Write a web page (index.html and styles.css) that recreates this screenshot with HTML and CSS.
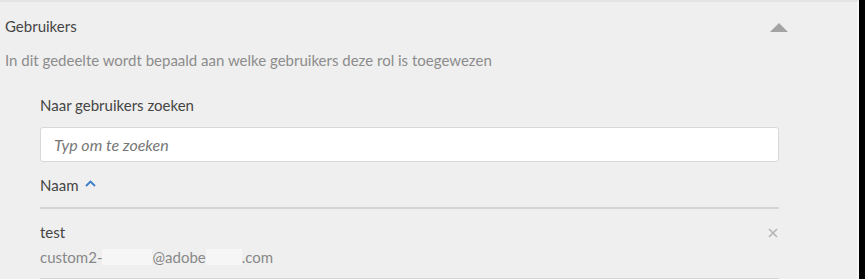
FILE: index.html
```html
<!DOCTYPE html>
<html lang="nl">
<head>
<meta charset="utf-8">
<link rel="stylesheet" href="styles.css">
</head>
<body>
<div class="frame">
  <section class="panel">
    <header class="panel-head">
      <h2 class="title">Gebruikers</h2>
      <span class="collapse" aria-hidden="true"></span>
    </header>
    <p class="desc">In dit gedeelte wordt bepaald aan welke gebruikers deze rol is toegewezen</p>
    <div class="body">
      <label class="label" for="q">Naar gebruikers zoeken</label>
      <input id="q" class="search" type="text" placeholder="Typ om te zoeken">
      <div class="col-head">Naam <svg class="chev" width="11" height="7" viewBox="0 0 11 7"><path d="M1 6 L5.5 1.5 L10 6" fill="none" stroke="#3a7bcb" stroke-width="1.8"/></svg></div>
      <div class="row">
        <div class="row-text">
          <div class="name">test</div>
          <div class="email">custom2-<span class="blur b1"></span>@adobe<span class="blur b2"></span>.com</div>
        </div>
        <svg class="remove" width="10" height="10" viewBox="0 0 10 10"><path d="M1 1 L9 9 M9 1 L1 9" stroke="#b5b5b5" stroke-width="1.6"/></svg>
      </div>
    </div>
  </section>
  <div class="edge"></div>
</div>
</body>
</html>
```

FILE: styles.css
```css
html, body {
  margin: 0;
  padding: 0;
  background: #efefef;
}
body {
  font-family: "Lato", "Open Sans", sans-serif;
  color: #4b4b4b;
  overflow: hidden;
}
.frame {
  display: flex;
  height: 279px;
  width: 865px;
}
.panel {
  flex: 1;
  border-top: 2px solid #e4e4e4;
  box-sizing: border-box;
  height: 279px;
  border-right: 2px solid #f7f7f7;
}
.edge {
  width: 6px;
  background: #000;
}
.panel-head {
  display: flex;
  align-items: center;
  justify-content: space-between;
  padding: 14px 69px 0 5px;
  height: 20px;
}
.title {
  margin: 0;
  font-size: 15px;
  font-weight: 400;
  color: #454545;
}
.collapse {
  width: 0;
  height: 0;
  border-left: 9px solid transparent;
  border-right: 9px solid transparent;
  border-bottom: 9px solid #a3a3a3;
  margin-top: 2px;
}
.desc {
  margin: 15px 0 0 5px;
  font-size: 15px;
  color: #8c8c8c;
}
.body {
  padding: 0 78px 0 40px;
}
.label {
  display: block;
  margin-top: 27px;
  font-size: 15px;
  color: #454545;
}
.search {
  display: block;
  box-sizing: border-box;
  width: 100%;
  height: 35px;
  margin-top: 13px;
  border: 1px solid #d8d8d8;
  border-radius: 3px;
  background: #fff;
  padding: 0 13px;
  font-family: inherit;
  font-size: 16px;
  font-style: italic;
  outline: none;
}
.search::placeholder {
  color: #777;
  font-style: italic;
}
.col-head {
  display: flex;
  align-items: center;
  gap: 7px;
  height: 45px;
  font-size: 15px;
  color: #454545;
  border-bottom: 2px solid #d4d4d4;
}
.chev {
  margin-top: -2px;
}
.row {
  display: flex;
  justify-content: space-between;
  padding-top: 13px;
  border-bottom: 2px solid #d4d4d4;
  height: 56px;
}
.name {
  font-size: 15px;
  color: #454545;
  line-height: 20px;
}
.email {
  margin-top: 5px;
  font-size: 15px;
  color: #888;
  line-height: 20px;
}
.blur {
  display: inline-block;
  height: 16px;
  vertical-align: -2px;
  background: #f6f6f6;
}
.b1 { width: 50px; }
.b2 { width: 36px; }
.remove {
  margin-top: 6px;
  margin-right: 1px;
}
```
